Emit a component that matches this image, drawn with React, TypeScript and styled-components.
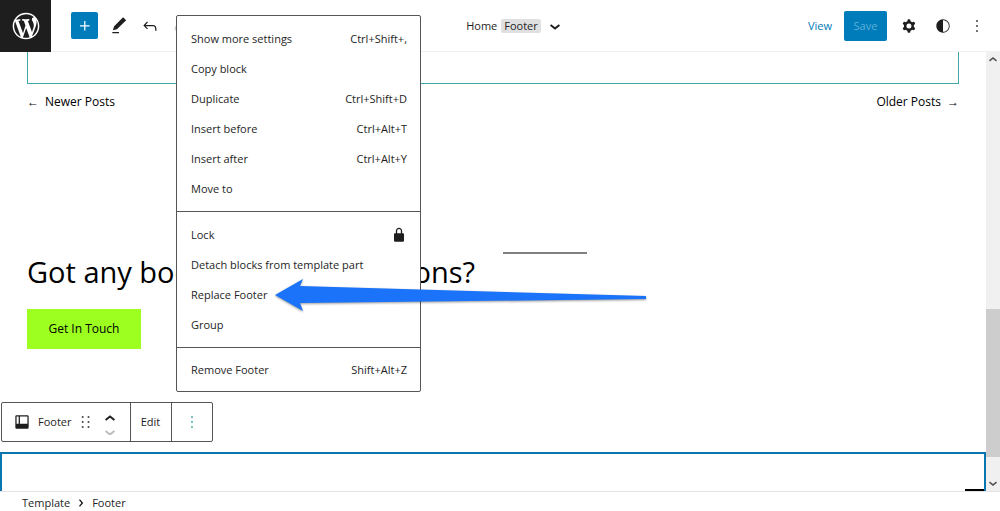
import React from "react";
import styled, { createGlobalStyle } from "styled-components";

const GlobalStyle = createGlobalStyle`
  *, *::before, *::after { box-sizing: border-box; }
  body {
    margin: 0;
    background: #fff;
    color: #1e1e1e;
    font-family: "Open Sans", "Noto Sans", sans-serif;
    font-size: 11px;
    line-height: 16px;
  }
  button { font: inherit; color: inherit; background: none; border: 0; padding: 0; }
  a { color: inherit; text-decoration: none; }
  h2 { margin: 0; }
`;

const icons = {
  plus: "M11 12.5V17.5H12.5V12.5H17.5V11H12.5V6H11V11H6V12.5H11Z",
  edit: "M20.6 5.100L16.900 1.600 6.200 12.400l-1.600 4.800 4.900-1.400L20.600 5.100zM4 20.800h8v-1.600H4v1.600z",
  undo: "M18.3 11.7c-.6-.6-1.4-.9-2.3-.9H6.7l2.9-3.3-1.1-1-4.5 5L8.5 16l1-1-2.7-2.7H16c.5 0 .9.2 1.3.5 1 1 1 3.4 1 4.5v.3h1.5v-.2c0-1.5 0-4.3-1.5-5.7z",
  redo: "M15.6 6.5l-1.1 1 2.9 3.3H8c-.9 0-1.7.3-2.3.9-1.4 1.5-1.4 4.2-1.4 5.6v.2h1.5v-.3c0-1.1 0-3.5 1-4.5.3-.3.7-.5 1.3-.5h9.2L14.5 15l1.1 1.1 4.6-4.6-4.6-5z",
  down: "M18 11.6L12 16.400l-6-4.800 1.400-1.700L12 13.600l4.600-3.700 1.400 1.700z",
  up: "M6 12.400L12 7.600l6 4.800-1.400 1.700L12 10.400l-4.600 3.700L6 12.400z",
  right: "M10.300 5.500L8.500 7l4.200 5-4.200 5 1.800 1.500 5.500-6.500z",
  cog: "M10.289 4.836A1 1 0 0111.275 4h1.306a1 1 0 01.987.836l.244 1.466c.787.26 1.503.679 2.108 1.218l1.393-.522a1 1 0 011.216.437l.653 1.13a1 1 0 01-.23 1.273l-1.148.944a6.025 6.025 0 010 2.435l1.149.946a1 1 0 01.23 1.272l-.653 1.13a1 1 0 01-1.216.437l-1.394-.522c-.605.54-1.32.958-2.108 1.218l-.244 1.466a1 1 0 01-.987.836h-1.306a1 1 0 01-.986-.836l-.244-1.466a5.995 5.995 0 01-2.108-1.218l-1.394.522a1 1 0 01-1.217-.436l-.653-1.131a1 1 0 01.23-1.272l1.149-.946a6.026 6.026 0 010-2.435l-1.148-.944a1 1 0 01-.23-1.272l.653-1.131a1 1 0 011.217-.437l1.393.522a5.994 5.994 0 012.108-1.218l.244-1.466zM14.929 12a3 3 0 11-6 0 3 3 0 016 0z",
  styles: "M12 4c-4.4 0-8 3.6-8 8v.1c0 4.1 3.2 7.5 7.2 7.9h.8c4.4 0 8-3.6 8-8s-3.6-8-8-8zm0 15V5c3.9 0 7 3.1 7 7s-3.1 7-7 7z",
  more: "M13 19h-2v-2h2v2zm0-6h-2v-2h2v2zm0-6h-2V5h2v2z",
  drag: "M7 7h2V5H7v2zm0 6h2v-2H7v2zm0 6h2v-2H7v2zm7-14v2h2V5h-2zm0 8h2v-2h-2v2zm0 6h2v-2h-2v2z",
  lock: "M17 10h-1.2V7c0-2.1-1.7-3.8-3.8-3.8-2.1 0-3.8 1.7-3.8 3.8v3H7c-.6 0-1 .4-1 1v8c0 .6.4 1 1 1h10c.6 0 1-.4 1-1v-8c0-.6-.4-1-1-1zm-2.8 0H9.800V7c0-1.200 1-2.200 2.200-2.200s2.200 1 2.200 2.200v3z",
  template: "M5.5 4h13A1.5 1.5 0 0120 5.500v13a1.500 1.500 0 01-1.500 1.500h-13A1.500 1.500 0 014 18.500v-13A1.500 1.500 0 015.500 4zM5.500 5.500v8.500h2.500V5.500zM9.500 5.500v8.500h9V5.500z",
};

const Svg = styled.svg`
  display: block;
  flex: none;
  fill: currentColor;
`;

function Icon({ name, size = 20 }: { name: keyof typeof icons; size?: number }) {
  return (
    <Svg width={size} height={size} viewBox="0 0 24 24" aria-hidden="true">
      <path fillRule="evenodd" d={icons[name]} />
    </Svg>
  );
}

const Page = styled.div`
  position: relative;
  display: flex;
  flex-direction: column;
  min-height: 100vh;
`;

const Header = styled.header`
  display: flex;
  align-items: center;
  height: 52px;
  border-bottom: 1px solid #f0f0f0;
`;

const Logo = styled.a`
  display: grid;
  place-items: center;
  width: 51px;
  height: 52px;
  margin-bottom: -1px;
  background: #1e1e1e;
  color: #fff;
`;

const Tools = styled.div`
  display: flex;
  align-items: center;
  gap: 11px;
  width: 172px;
  padding-left: 20px;
`;

const IconButton = styled.button<{ $tone?: string }>`
  display: grid;
  place-items: center;
  color: ${(p) => p.$tone || "#1e1e1e"};
`;

const Inserter = styled(IconButton)`
  width: 27px;
  height: 27px;
  border-radius: 2px;
  background: #007cba;
  color: #fff;
`;

const DocumentTitle = styled.div`
  flex: 1;
  display: flex;
  align-items: center;
  justify-content: center;
  gap: 4px;
`;

const Chip = styled.span`
  padding: 0 3px;
  border-radius: 2px;
  background: #e0e0e0;
  line-height: 14px;
`;

const Actions = styled.div`
  display: flex;
  align-items: center;
  gap: 12px;
  padding-right: 13px;
`;

const ActionIcons = styled.div`
  display: flex;
  gap: 14px;
`;

const ViewLink = styled.a`
  color: #007cba;
`;

const SaveButton = styled.button`
  width: 43px;
  height: 30px;
  border-radius: 2px;
  background: #007cba;
  color: #5cb0da;
`;

const Workspace = styled.div`
  flex: 1;
  display: flex;
`;

const Canvas = styled.main`
  flex: 1;
  min-width: 0;
  display: flex;
  flex-direction: column;
  color: #000;
`;

const Content = styled.div`
  padding: 0 27px;
`;

const QueryBlock = styled.div`
  height: 32px;
  border: 1px solid #45a5a8;
  border-top: 0;
`;

const Pagination = styled.nav`
  display: flex;
  justify-content: space-between;
  padding-top: 8px;
  font-size: 12px;
  line-height: 20px;
`;

const PageLink = styled.a`
  display: flex;
  gap: 6px;
`;

const Columns = styled.div`
  display: grid;
  grid-template-columns: repeat(2, minmax(0, 1fr));
  gap: 20px;
  padding-top: 140px;
`;

const Heading = styled.h2`
  font-size: 29px;
  font-weight: 400;
  line-height: 40px;
  white-space: nowrap;
`;

const ContactButton = styled.button`
  width: 114px;
  height: 40px;
  margin-top: 17px;
  background: #9dff20;
  color: #000;
  font-size: 12px;
`;

const Separator = styled.hr`
  width: 84px;
  height: 2px;
  margin: 0;
  border: 0;
  background: #808080;
`;

const BlockToolbar = styled.div`
  display: flex;
  align-self: flex-start;
  height: 40px;
  margin: 53px 0 10px 1px;
  border: 1px solid #555;
  border-radius: 2px;
  color: #1e1e1e;
`;

const ToolbarGroup = styled.div`
  display: flex;
  align-items: center;
  justify-content: center;
  min-width: 41px;
  padding: 0 10px;
  & + & { border-left: 1px solid #555; }
`;

const BlockName = styled.span`
  margin: 0 4px 0 6px;
`;

const Movers = styled.div`
  display: grid;
  margin-left: 4px;
`;

const MoverButton = styled(IconButton)`
  height: 13px;
  overflow: hidden;
`;

const FooterBlock = styled.section`
  flex: 1;
  min-height: 39px;
  display: flex;
  align-items: flex-end;
  justify-content: flex-end;
  border: solid #0a76b0;
  border-width: 2px 2px 0;
`;

const FooterRule = styled.div`
  width: 19px;
  height: 2px;
  background: #000;
`;

const ScrollBar = styled.div`
  display: flex;
  flex-direction: column;
  align-items: center;
  width: 14px;
  background: #f0f0f0;
  color: #505050;
`;

const ScrollTrack = styled.div`
  flex: 1;
  width: 100%;
  display: flex;
  flex-direction: column;
  justify-content: flex-end;
  padding-bottom: 18px;
`;

const ScrollThumb = styled.div`
  height: 148px;
  background: #cdcdcd;
`;

const Breadcrumb = styled.footer`
  display: flex;
  align-items: center;
  gap: 4px;
  height: 20px;
  padding: 2px 22px 0;
  border-top: 1px solid #e4e4e4;
`;

const Menu = styled.div`
  position: absolute;
  top: 15px;
  left: 176px;
  width: 245px;
  background: #fff;
  border: 1px solid #555;
  border-radius: 2px;
`;

const MenuGroup = styled.div`
  padding: 8px 0 7px;
  & + & { border-top: 1px solid #555; }
  &:last-child { padding: 7px 0 6px; }
`;

const MenuItem = styled.button`
  display: flex;
  align-items: center;
  justify-content: space-between;
  width: 100%;
  height: 30px;
  padding: 0 13px 0 14px;
`;

const MenuIcon = styled.span`
  margin-right: -2px;
`;

const Pointer = styled.svg`
  position: absolute;
  top: 270px;
  left: 270px;
  pointer-events: none;
  filter: drop-shadow(0 1px 1px rgba(0, 0, 0, 0.4));
`;

const menu: { label: string; shortcut?: string; icon?: keyof typeof icons }[][] = [
  [
    { label: "Show more settings", shortcut: "Ctrl+Shift+," },
    { label: "Copy block" },
    { label: "Duplicate", shortcut: "Ctrl+Shift+D" },
    { label: "Insert before", shortcut: "Ctrl+Alt+T" },
    { label: "Insert after", shortcut: "Ctrl+Alt+Y" },
    { label: "Move to" },
  ],
  [
    { label: "Lock", icon: "lock" },
    { label: "Detach blocks from template part" },
    { label: "Replace Footer" },
    { label: "Group" },
  ],
  [{ label: "Remove Footer", shortcut: "Shift+Alt+Z" }],
];

export default function App() {
  return (
    <>
      <GlobalStyle />
      <Page>
        <Header>
          <Logo href="#" aria-label="WordPress">
            <Svg width="32" height="32" viewBox="-2 -2 24 24" aria-hidden="true">
              <path d="M20 10c0-5.51-4.49-10-10-10C4.48 0 0 4.49 0 10c0 5.52 4.48 10 10 10 5.51 0 10-4.48 10-10zM7.78 15.37L4.37 6.22c.55-.02 1.17-.08 1.17-.08.5-.06.44-1.13-.06-1.11 0 0-1.45.11-2.37.11-.18 0-.37 0-.58-.01C4.12 2.69 6.87 1.11 10 1.11c2.33 0 4.45.87 6.05 2.34-.68-.11-1.65.39-1.65 1.58 0 .74.45 1.36.9 2.1.35.61.55 1.36.55 2.46 0 1.49-1.4 5-1.4 5l-3.03-8.37c.54-.02.82-.17.82-.17.5-.05.44-1.25-.06-1.22 0 0-1.44.12-2.38.12-.87 0-2.33-.12-2.33-.12-.5-.03-.56 1.2-.06 1.22l.92.08 1.26 3.41zM17.41 10c.24-.64.74-1.87.43-4.25.7 1.29 1.05 2.71 1.05 4.25 0 3.29-1.73 6.24-4.4 7.78.97-2.59 1.94-5.2 2.92-7.78zM6.1 18.09C3.12 16.65 1.11 13.53 1.11 10c0-1.3.23-2.48.72-3.59C3.25 10.3 4.67 14.2 6.1 18.09zm4.03-6.63l2.58 6.98c-.86.29-1.76.45-2.71.45-.79 0-1.57-.11-2.29-.33.81-2.38 1.62-4.74 2.42-7.1z" />
            </Svg>
          </Logo>
          <Tools>
            <Inserter aria-label="Add block"><Icon name="plus" /></Inserter>
            <IconButton aria-label="Edit"><Icon name="edit" /></IconButton>
            <IconButton aria-label="Undo"><Icon name="undo" /></IconButton>
            <IconButton aria-label="Redo" $tone="#ccc" disabled><Icon name="redo" /></IconButton>
          </Tools>
          <DocumentTitle>
            <span>Home</span>
            <Chip>Footer</Chip>
            <IconButton aria-label="Show template details"><Icon name="down" /></IconButton>
          </DocumentTitle>
          <Actions>
            <ViewLink href="#">View</ViewLink>
            <SaveButton>Save</SaveButton>
            <ActionIcons>
              <IconButton aria-label="Settings"><Icon name="cog" /></IconButton>
              <IconButton aria-label="Styles"><Icon name="styles" /></IconButton>
              <IconButton aria-label="Options"><Icon name="more" /></IconButton>
            </ActionIcons>
          </Actions>
        </Header>

        <Workspace>
          <Canvas>
            <Content>
              <QueryBlock />
              <Pagination>
                <PageLink href="#"><span>←</span><span>Newer Posts</span></PageLink>
                <PageLink href="#"><span>Older Posts</span><span>→</span></PageLink>
              </Pagination>
              <Columns>
                <div>
                  <Heading>Got any book recommendations?</Heading>
                  <ContactButton>Get In Touch</ContactButton>
                </div>
                <Separator />
              </Columns>
            </Content>
            <BlockToolbar>
              <ToolbarGroup>
                <Icon name="template" />
                <BlockName>Footer</BlockName>
                <IconButton aria-label="Drag"><Icon name="drag" /></IconButton>
                <Movers>
                  <MoverButton aria-label="Move up"><Icon name="up" /></MoverButton>
                  <MoverButton aria-label="Move down" $tone="#bbb" disabled><Icon name="down" /></MoverButton>
                </Movers>
              </ToolbarGroup>
              <ToolbarGroup><button>Edit</button></ToolbarGroup>
              <ToolbarGroup>
                <IconButton aria-label="Options" $tone="#2a9d94"><Icon name="more" /></IconButton>
              </ToolbarGroup>
            </BlockToolbar>
            <FooterBlock><FooterRule /></FooterBlock>
          </Canvas>
          <ScrollBar>
            <Icon name="up" size={16} />
            <ScrollTrack><ScrollThumb /></ScrollTrack>
            <Icon name="down" size={16} />
          </ScrollBar>
        </Workspace>

        <Breadcrumb>
          <span>Template</span>
          <Icon name="right" size={14} />
          <span>Footer</span>
        </Breadcrumb>

        <Menu role="menu">
          {menu.map((group, i) => (
            <MenuGroup key={i} role="group">
              {group.map((item) => (
                <MenuItem key={item.label} role="menuitem">
                  <span>{item.label}</span>
                  {item.shortcut && <span>{item.shortcut}</span>}
                  {item.icon && <MenuIcon><Icon name={item.icon} /></MenuIcon>}
                </MenuItem>
              ))}
            </MenuGroup>
          ))}
        </Menu>

        <Pointer width="384" height="50" viewBox="0 0 384 50" aria-hidden="true">
          <path fill="#1a73f8" d="M5 25L33 9L30 16L376 26V29L30 33L33 41Z" />
        </Pointer>
      </Page>
    </>
  );
}
